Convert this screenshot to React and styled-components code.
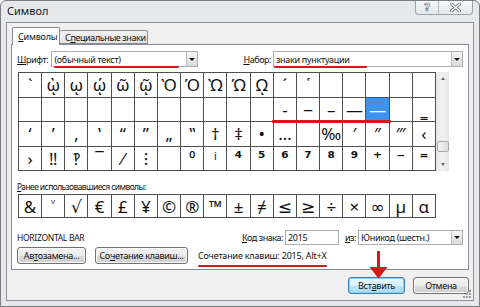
import React from 'react';
import styled, { createGlobalStyle } from 'styled-components';

const UI = `"Noto Sans", "DejaVu Sans", sans-serif`;
const SYM = `"Noto Sans", "DejaVu Sans", sans-serif`;
const SUP = `"DejaVu Sans", sans-serif`;

const Global = createGlobalStyle`
  html, body { margin: 0; padding: 0; background: #ffffff; }
  body { font-family: ${UI}; }
  * { box-sizing: border-box; }
`;

const Window = styled.div`
  position: relative;
  width: 480px;
  height: 307px;
  background: #e6e8eb;
  border: 1px solid #7b7d80;
  border-radius: 6px 6px 0 0;
  display: flex;
  flex-direction: column;
  font-family: ${UI};
  font-size: 9px;
  letter-spacing: -0.3px;
  color: #111;
  overflow: hidden;
`;

const TitleBar = styled.div`
  height: 21px;
  flex: none;
  display: flex;
  align-items: flex-start;
  justify-content: space-between;
  padding: 0 6px 0 6px;
`;

const Title = styled.div`
  font-size: 11px;
  line-height: 12px;
  margin-top: 4px;
  letter-spacing: 0;
  color: #1a1a1a;
`;

const Caption = styled.div`
  display: flex;
  height: 15px;
  margin-top: -1px;
  border: 1px solid #9ea2a8;
  border-top: none;
  border-radius: 0 0 4px 4px;
  background: linear-gradient(#f7f8f9, #e4e7ea);
`;

const CapBtn = styled.div`
  width: ${(p) => p.$w}px;
  display: flex;
  align-items: center;
  justify-content: center;
  & + & { border-left: 1px solid #b4b7bc; }
`;

const HelpGlyph = styled.span`
  font-family: "DejaVu Sans", sans-serif;
  font-size: 11px;
  font-weight: bold;
  color: #fff;
  -webkit-text-stroke: 0.7px #7c7f84;
  line-height: 11px;
`;

const Client = styled.div`
  position: relative;
  flex: 1;
  margin: 0 5px 5px 5px;
  border: 1px solid #8e9093;
  background: #f0f0f0;
  padding: 5px 4px 0 4px;
  display: flex;
  flex-direction: column;
`;

const TabRow = styled.div`
  display: flex;
  align-items: flex-end;
  height: 17px;
  padding-left: 1px;
  margin-bottom: -1px;
  position: relative;
  z-index: 1;
`;

const Tab = styled.div`
  width: ${(p) => p.$w}px;
  height: ${(p) => (p.$active ? 18 : 14)}px;
  margin-bottom: ${(p) => (p.$active ? 0 : 1)}px;
  padding: 0 5px;
  display: flex;
  align-items: center;
  border: 1px solid #898c95;
  border-bottom: ${(p) => (p.$active ? 'none' : '1px solid #898c95')};
  border-left: ${(p) => (p.$active ? '1px solid #898c95' : 'none')};
  border-radius: 2px 2px 0 0;
  background: ${(p) => (p.$active ? '#ffffff' : 'linear-gradient(#f3f3f3, #e3e3e3)')};
  white-space: nowrap;
  letter-spacing: ${(p) => (p.$active ? '-0.2px' : '-0.4px')};
`;

const Panel = styled.div`
  height: 226px;
  flex: none;
  border: 1px solid #898c95;
  background: #ffffff;
  padding: 6px 5px 5px 5px;
  display: flex;
  flex-direction: column;
`;

const Row = styled.div`
  display: flex;
  align-items: center;
  height: ${(p) => p.$h || 16}px;
  margin-top: ${(p) => p.$mt || 0}px;
  flex: none;
`;

const Label = styled.span`
  flex: none;
  width: ${(p) => (p.$w ? `${p.$w}px` : 'auto')};
  margin-left: ${(p) => p.$ml || 0}px;
  margin-right: ${(p) => p.$mr || 0}px;
  white-space: nowrap;
  font-size: ${(p) => p.$fs || 9}px;
  letter-spacing: ${(p) => (p.$ls !== undefined ? p.$ls : -0.35)}px;
  color: #111;
`;

const Key = styled.u`
  text-decoration-thickness: 1px;
  text-underline-offset: 1px;
`;

const Combo = styled.div`
  position: relative;
  flex: ${(p) => (p.$w ? 'none' : '1')};
  width: ${(p) => (p.$w ? `${p.$w}px` : 'auto')};
  height: ${(p) => p.$h || 16}px;
  border: 1px solid #abadb3;
  background: #ffffff;
  display: flex;
  align-items: center;
  padding-left: 2px;
  white-space: nowrap;
`;

const DropBtn = styled.div`
  margin-left: auto;
  width: 11px;
  height: 100%;
  border-left: 1px solid #b9bcc2;
  background: linear-gradient(#f6f6f6, #dadada);
  display: flex;
  align-items: center;
  justify-content: center;
  &::after {
    content: '';
    border-left: 3px solid transparent;
    border-right: 3px solid transparent;
    border-top: 3px solid #111;
  }
`;

const Mark = styled.div`
  position: absolute;
  left: ${(p) => p.$l}px;
  top: ${(p) => p.$t}px;
  width: ${(p) => p.$w}px;
  height: ${(p) => p.$h || 2}px;
  background: #d11a1a;
  border-radius: 1px;
  z-index: 3;
`;

const GridWrap = styled.div`
  position: relative;
  display: flex;
  margin: ${(p) => p.$mt || 0}px 0 0 1px;
  flex: none;
`;

const Grid = styled.div`
  width: 418px;
  display: grid;
  grid-template-columns: repeat(18, 1fr);
  grid-auto-rows: ${(p) => p.$rh}px;
  gap: 1px;
  padding: 1px;
  background: #4e4e4e;
`;

const Cell = styled.div`
  background: ${(p) => (p.$sel ? '#3d94ee' : '#ffffff')};
  color: ${(p) => (p.$sel ? '#ffffff' : '#111')};
  display: flex;
  align-items: center;
  justify-content: center;
  font-family: ${(p) => (p.$sup ? SUP : SYM)};
  font-weight: ${(p) => (p.$sup ? 700 : 400)};
  font-size: ${(p) => p.$fs || 17}px;
  letter-spacing: 0;
  line-height: 1;
  overflow: hidden;
`;

const Scroll = styled.div`
  width: 13px;
  display: flex;
  flex-direction: column;
  background: linear-gradient(90deg, #e6e6e6, #f2f2f2 50%, #e6e6e6);
`;

const ScrollArrow = styled.div`
  height: 13px;
  display: flex;
  align-items: center;
  justify-content: center;
  &::after {
    content: '';
    border-left: 2.5px solid transparent;
    border-right: 2.5px solid transparent;
    ${(p) => (p.$up ? 'border-bottom: 3px solid #6a6a6a;' : 'border-top: 3px solid #6a6a6a;')}
  }
`;

const Track = styled.div`
  flex: 1;
  display: flex;
  flex-direction: column;
  justify-content: flex-end;
  align-items: center;
  padding-bottom: 6px;
`;

const Thumb = styled.div`
  width: 12px;
  height: 11px;
  border: 1px solid #a7a9ad;
  border-radius: 2px;
  background: linear-gradient(90deg, #f2f2f2, #dedede);
`;

const TextBox = styled.div`
  flex: none;
  width: ${(p) => p.$w}px;
  height: 15px;
  border: 1px solid #abadb3;
  background: #fff;
  display: flex;
  align-items: center;
  padding-left: 2px;
`;

const Button = styled.div`
  flex: none;
  width: ${(p) => p.$w}px;
  height: 17px;
  margin-left: ${(p) => p.$ml || 0}px;
  border: 1px solid ${(p) => (p.$def ? '#3c7fb1' : '#707070')};
  border-radius: 3px;
  background: ${(p) =>
    p.$def
      ? 'linear-gradient(#eaf6fd 0%, #d9f0fc 50%, #bee6fd 51%, #a7d9f5 100%)'
      : 'linear-gradient(#f2f2f2 0%, #ebebeb 50%, #dddddd 51%, #cfcfcf 100%)'};
  box-shadow: ${(p) => (p.$def ? 'inset 0 0 0 1px #8fd0f0' : 'inset 0 0 0 1px #fbfbfb')};
  display: flex;
  align-items: center;
  justify-content: center;
  white-space: nowrap;
  color: #111;
`;

const Status = styled.span`
  position: relative;
  margin-left: 10px;
  white-space: nowrap;
  letter-spacing: -0.2px;
  &::after {
    content: '';
    position: absolute;
    left: 0;
    right: 0;
    bottom: -5px;
    height: 2px;
    background: #d11a1a;
    border-radius: 1px;
  }
`;

const Footer = styled.div`
  display: flex;
  justify-content: flex-end;
  gap: 8px;
  margin-top: 7px;
`;

const Overlay = styled.svg`
  position: absolute;
  z-index: 5;
`;

const row1 = ['`', 'ῲ', 'ῳ', 'ῴ', 'ῶ', 'ῷ', 'Ὸ', 'Ό', 'Ὼ', 'Ώ', 'ῼ', '´', '῾', '', '', '', '', ''];
const row2 = ['', '', '', '', '', '', '', '', '', '', '', '‐', '‒', '–', '—', '―', '', '‗'];
const row3 = ['‘', '’', '‚', '‛', '“', '”', '„', '‟', '†', '‡', '•', '…', '', '‰', '′', '″', '‴', '‹'];
const row4 = ['›', '‼', '‽', '‾', '⁄', '⁝', '', '⁰', 'ⁱ', '⁴', '⁵', '⁶', '⁷', '⁸', '⁹', '⁺', '⁻', '⁼'];
const recent = ['&', '˅', '√', '€', '£', '¥', '©', '®', '™', '±', '≠', '≤', '≥', '÷', '×', '∞', 'µ', 'α'];

export default function App() {
  const cells = [row1, row2, row3, row4];
  return (
    <>
      <Global />
      <Window>
        <TitleBar>
          <Title>Символ</Title>
          <Caption>
            <CapBtn $w={22}>
              <HelpGlyph>?</HelpGlyph>
            </CapBtn>
            <CapBtn $w={34}>
              <svg width="11" height="9" viewBox="0 0 11 9">
                <path d="M1.5 1 L9.5 8 M9.5 1 L1.5 8" stroke="#7c7f84" strokeWidth="3" strokeLinecap="square" />
                <path d="M1.5 1 L9.5 8 M9.5 1 L1.5 8" stroke="#ffffff" strokeWidth="1.2" strokeLinecap="square" />
              </svg>
            </CapBtn>
          </Caption>
        </TitleBar>

        <Client>
          <TabRow>
            <Tab $active $w={48}>
              <Key>С</Key>имволы
            </Tab>
            <Tab $w={88}>
              С<Key>п</Key>ециальные знаки
            </Tab>
          </TabRow>

          <Panel>
            <Row>
              <Label $mr={3}>
                <Key>Ш</Key>рифт:
              </Label>
              <Combo $w={147}>
                (обычный текст)
                <DropBtn />
                <Mark $l={2} $t={14} $w={125} />
              </Combo>
              <Label $ml={45} $mr={2} $ls={-0.45}>
                <Key>Н</Key>абор:
              </Label>
              <Combo>
                знаки пунктуации
                <DropBtn />
                <Mark $l={0} $t={14} $w={93} />
              </Combo>
            </Row>

            <GridWrap $mt={5}>
              <Grid $rh={23.5}>
                {cells.map((r, ri) =>
                  r.map((c, ci) => {
                    const sup = ri === 3 && ci >= 9;
                    return (
                      <Cell key={`${ri}-${ci}`} $sel={ri === 1 && ci === 15} $sup={sup} $fs={sup ? 17 : 17}>
                        {c}
                      </Cell>
                    );
                  })
                )}
              </Grid>
              <Scroll>
                <ScrollArrow $up />
                <Track>
                  <Thumb />
                </Track>
                <ScrollArrow />
              </Scroll>
              <Mark $l={254} $t={48} $w={119} $h={3} />
            </GridWrap>

            <Row $h={13} $mt={9}>
              <Label $fs={8.5} $ls={-0.6}>
                <Key>Р</Key>анее использовавшиеся символы:
              </Label>
            </Row>

            <GridWrap $mt={1}>
              <Grid $rh={22}>
                {recent.map((c, i) => (
                  <Cell key={i} $fs={17}>
                    {c}
                  </Cell>
                ))}
              </Grid>
            </GridWrap>

            <Row $h={15} $mt={12}>
              <Label $w={225} $fs={8.5} $ls={-0.3}>HORIZONTAL BAR</Label>
              <Label $mr={2} $ls={-0.45}>
                <Key>К</Key>од знака:
              </Label>
              <TextBox $w={54}>2015</TextBox>
              <Label $ml={6} $mr={2} $ls={-0.45}>
                <Key>и</Key>з:
              </Label>
              <Combo $h={15}>
                Юникод (шестн.)
                <DropBtn />
              </Combo>
            </Row>

            <Row $h={17} $mt={2}>
              <Button $w={69}>
                Ав<Key>т</Key>озамена...
              </Button>
              <Button $w={93} $ml={9}>
                Со<Key>ч</Key>етание клавиш...
              </Button>
              <Status>Сочетание клавиш: 2015, Alt+X</Status>
            </Row>
          </Panel>

          <Footer>
            <Button $w={57} $def>
              Вст<Key>а</Key>вить
            </Button>
            <Button $w={56}>Отмена</Button>
          </Footer>

          <Overlay width="10" height="10" viewBox="0 0 10 10" style={{ right: 1, bottom: 1 }}>
            <g fill="#9a9a9a">
              <rect x="7" y="1" width="2" height="2" />
              <rect x="4" y="4" width="2" height="2" />
              <rect x="7" y="4" width="2" height="2" />
              <rect x="1" y="7" width="2" height="2" />
              <rect x="4" y="7" width="2" height="2" />
              <rect x="7" y="7" width="2" height="2" />
            </g>
          </Overlay>
        </Client>

        <Overlay width="19" height="28" viewBox="0 0 19 28" style={{ left: 368, top: 250 }}>
          <rect x="8" y="0" width="3" height="18" fill="#d11a1a" />
          <polygon points="0.5,16 18.5,16 9.5,27.5" fill="#d11a1a" />
        </Overlay>
      </Window>
    </>
  );
}
